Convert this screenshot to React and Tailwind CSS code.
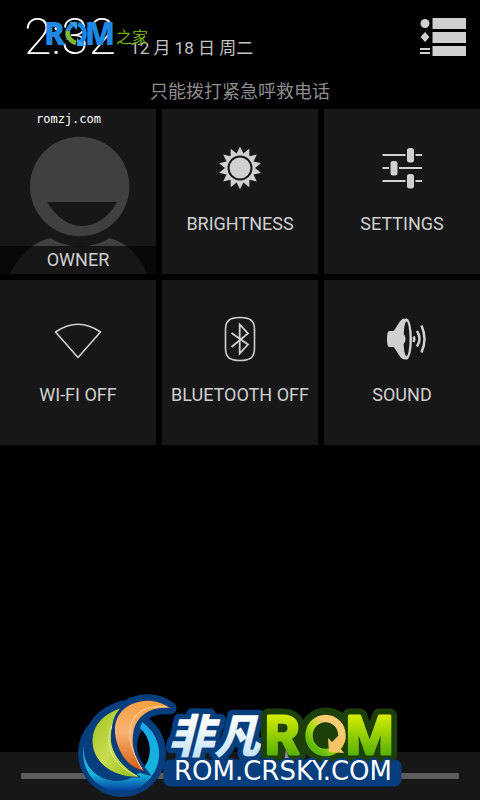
const sunPoints = Array.from({ length: 28 }, (_, i) => {
  const r = i % 2 === 0 ? 21.5 : 15;
  const a = (i * Math.PI) / 14;
  return `${(24 + r * Math.sin(a)).toFixed(2)},${(24 - r * Math.cos(a)).toFixed(2)}`;
}).join(" ");

function SunIcon() {
  return (
    <svg className="size-12" viewBox="0 0 48 48" aria-hidden="true">
      <polygon points={sunPoints} fill="#d0d0d0" />
      <circle cx="24" cy="24" r="11.5" fill="#d0d0d0" stroke="#171717" strokeWidth="2" />
    </svg>
  );
}

function SlidersIcon() {
  return (
    <svg className="size-12" viewBox="0 0 48 48" fill="#d0d0d0" aria-hidden="true">
      <path d="M4.5 10h23v2h-23zM37.5 10H44v2h-6.5zM4.5 23H11v2H4.5zM21 23h23v2H21zM4.5 36h23v2h-23zM37.5 36H44v2h-6.5z" />
      <rect x="29" y="4" width="7" height="14.5" rx="2.5" />
      <rect x="12.5" y="17" width="7" height="14.5" rx="2.5" />
      <rect x="29" y="30" width="7" height="14.5" rx="2.5" />
    </svg>
  );
}

function WifiIcon() {
  return (
    <svg className="size-12" viewBox="0 0 48 48" fill="none" stroke="#d0d0d0" strokeWidth="1.6" strokeLinejoin="round" aria-hidden="true">
      <path d="M1.5 17Q24 1.5 46.5 17L24 42.5Z" />
    </svg>
  );
}

function BluetoothIcon() {
  return (
    <svg className="size-12" viewBox="0 0 48 48" fill="none" stroke="#d0d0d0" strokeWidth="1.6" aria-hidden="true">
      <path d="M24 2.5C35 2.5 38.5 6 38.5 15V33C38.5 42 35 45.500 24 45.500S9.500 42 9.500 33V15C9.500 6 13 2.500 24 2.500Z" />
      <path d="M15.500 18L32 29.500L23.700 38.500V9.500L32 18.500L15.500 32" strokeWidth="1.800" />
    </svg>
  );
}

function SpeakerIcon() {
  return (
    <svg className="size-12" viewBox="0 0 48 48" aria-hidden="true">
      <path d="M11 16H15.500C19 12 21 6 25 3.700H29V44.300H25C21 42 19 35.500 15.500 32H11Q9 31.500 9 24T11 16Z" fill="#d0d0d0" />
      <ellipse cx="28.500" cy="24" rx="5.500" ry="20.500" fill="#d0d0d0" />
      <ellipse cx="28.500" cy="24" rx="3" ry="17.500" fill="#171717" />
      <path d="M24 18Q27.500 20 27.500 24T24 30Z" fill="#d0d0d0" />
      <path d="M35.500 21.500Q37 24 35.500 27" fill="none" stroke="#d0d0d0" strokeWidth="2.500" />
      <path d="M39 16Q44 24 39 31.500M43.500 10.500Q49.500 24 43.500 37.500" fill="none" stroke="#d0d0d0" strokeWidth="2.500" />
    </svg>
  );
}

function Tile({ label, children }) {
  return (
    <button className="flex flex-col items-center bg-[#171717] pt-[35px] pb-[38px]">
      {children}
      <span className="mt-5 text-lg leading-6 whitespace-nowrap">{label}</span>
    </button>
  );
}

function OwnerTile() {
  return (
    <button className="relative flex flex-col justify-end overflow-hidden bg-[#171717]">
      <svg className="absolute bottom-0 left-1/2 h-[165px] w-[156px] -translate-x-1/2" viewBox="0 0 156 165" aria-hidden="true">
        <path d="M10 165Q24 136 50 129Q80 146 110 129Q136 137 147 165Z" fill="#404040" />
        <circle cx="79.700" cy="77.500" r="49.700" fill="#404040" />
        <path d="M47 93H117C108 109 95 117 82 117S57 109 47 93Z" fill="#171717" />
      </svg>
      <span className="relative w-full bg-black/65 py-0.5 text-lg leading-6">OWNER</span>
    </button>
  );
}

function TopWatermark() {
  return (
    <div className="pointer-events-none absolute top-4 left-9">
      <svg className="h-8 w-28 overflow-visible" viewBox="36 16 112 32" role="img" aria-label="ROM之家">
        <g className="font-['Open_Sans',sans-serif] text-[31px] font-extrabold" fill="#1f88e4">
          <text x="44" y="45">R</text>
          <text x="85" y="45">M</text>
        </g>
        <path d="M72 25A10.500 10.500 0 0 0 69 39" fill="none" stroke="#2488df" strokeWidth="4.500" />
        <path d="M68 31A10.500 10.500 0 0 0 76 43" fill="none" stroke="#80b828" strokeWidth="4.500" />
        <path d="M78 24A10.500 10.500 0 0 1 79 43" fill="none" stroke="#1688e8" strokeWidth="4.500" />
        <path d="M69 22H77V30ZM86 46H77V38Z" fill="#2ca2f0" />
        <text x="116" y="43" className="font-['Noto_Sans_CJK_SC',sans-serif] text-base" fill="#74b000">之家</text>
      </svg>
      <div className="mt-[63px] font-['DejaVu_Sans_Mono',monospace] text-xs leading-4 text-white">romzj.com</div>
    </div>
  );
}

const greenMoon = "M123 707C104 713 92 724 92 742C93 764 115 779 140 777C122 767 108 751 112 730C114 719 117 713 123 707Z";
const orangeMoon = "M170 708C157 699 143 699 132 704C116 711 111 727 118 746C123 760 132 768 144 771C133 757 131 742 134 729C138 715 151 706 170 708Z";

function BottomWatermark() {
  return (
    <svg
      className="pointer-events-none absolute bottom-0 left-1/2 h-[108px] w-[328px] -translate-x-1/2"
      viewBox="76 692 328 108"
      role="img"
      aria-label="非凡ROM ROM.CRSKY.COM"
    >
      <defs>
        <linearGradient id="lime" x1="0" y1="0" x2="1" y2="1">
          <stop offset="0" stopColor="#9cc21c" />
          <stop offset="0.500" stopColor="#c8dc50" />
          <stop offset="1" stopColor="#8fbb14" />
        </linearGradient>
        <linearGradient id="amber" x1="0" y1="0" x2="0" y2="1">
          <stop offset="0" stopColor="#f8a040" />
          <stop offset="0.450" stopColor="#f9b272" />
          <stop offset="1" stopColor="#d95a10" />
        </linearGradient>
        <linearGradient id="sea" x1="0" y1="0" x2="0" y2="1">
          <stop offset="0" stopColor="#18a8e8" />
          <stop offset="0.750" stopColor="#14b4dc" />
          <stop offset="1" stopColor="#063898" />
        </linearGradient>
        <linearGradient id="ice" x1="0" y1="0" x2="0" y2="1">
          <stop offset="0.300" stopColor="#ffffff" />
          <stop offset="1" stopColor="#b4dcf8" />
        </linearGradient>
        <linearGradient id="leaf" gradientUnits="userSpaceOnUse" x1="0" y1="714" x2="0" y2="758">
          <stop offset="0" stopColor="#d8ee00" />
          <stop offset="1" stopColor="#4cac08" />
        </linearGradient>
        <linearGradient id="ring" gradientUnits="userSpaceOnUse" x1="336" y1="720" x2="312" y2="746">
          <stop offset="0.250" stopColor="#f8cc70" />
          <stop offset="0.550" stopColor="#b8dc18" />
          <stop offset="1" stopColor="#60b80c" />
        </linearGradient>
      </defs>

      <g fill="#063e7e" stroke="#063e7e" strokeLinejoin="round">
        <circle cx="122" cy="753" r="43.500" />
        <path d={greenMoon} strokeWidth="13" />
        <path d={orangeMoon} strokeWidth="13" />
        <rect x="164" y="760" width="237" height="26" rx="6" />
      </g>
      <path d="M143 729Q156 748 145 766Q130 748 143 729Z" fill="#050505" />
      <path d="M85 742A38 38 0 1 0 142 722L140 728A33 31 0 1 1 85 742Z" fill="url(#sea)" />
      <path d={greenMoon} fill="url(#lime)" stroke="#063e7e" strokeWidth="1" />
      <path d="M122 710C98 737 109 764 137 776" fill="none" stroke="#e4efa0" strokeWidth="1" />
      <path d={orangeMoon} fill="url(#amber)" stroke="#063e7e" strokeWidth="6" paintOrder="stroke" />
      <path d="M167 707C133 703 117 728 142 769" fill="none" stroke="#ffd9aa" strokeWidth="1" />

      <text
        x="168"
        y="753"
        className="font-['Noto_Sans_CJK_SC',sans-serif] text-[46px] font-black italic"
        fill="url(#ice)"
        stroke="#063e7e"
        strokeWidth="11"
        strokeLinejoin="round"
        paintOrder="stroke"
      >
        非凡
      </text>

      <g fill="#1d3f08" stroke="#1d3f08" strokeWidth="15" strokeLinejoin="round" className="font-[Roboto,sans-serif] text-[54px] font-bold">
        <text x="265" y="754">R</text>
        <text x="346" y="754">M</text>
        <ellipse cx="326" cy="735" rx="20" ry="20" />
      </g>
      <path d="M284 762L286 749L290 762Z" fill="#8c8c8c" />
      <g fill="url(#leaf)" stroke="url(#leaf)" strokeWidth="3" strokeLinejoin="round" className="font-[Roboto,sans-serif] text-[54px] font-bold">
        <text x="265" y="754">R</text>
        <text x="346" y="754">M</text>
      </g>
      <ellipse cx="325.500" cy="735.500" rx="16.500" ry="17" fill="none" stroke="url(#ring)" strokeWidth="7.500" />
      <path d="M328 738L332 742L338 736L346 738L340 748L344 753L329 752Z" fill="#f8c468" />

      <text
        x="283"
        y="780"
        textAnchor="middle"
        className="font-['DejaVu_Sans',sans-serif] text-[26px]"
        fill="#ffffff"
        stroke="#063e7e"
        strokeWidth="4"
        strokeLinejoin="round"
        paintOrder="stroke"
      >
        ROM.CRSKY.COM
      </text>
    </svg>
  );
}

export default function App() {
  return (
    <div className="relative flex min-h-screen flex-col bg-black font-[Roboto,'Noto_Sans_CJK_SC',sans-serif] text-[#d0d0d0]">
      <header className="flex items-start justify-between pt-[9px] pr-3.5 pl-6">
        <div className="flex items-baseline gap-3.5">
          <time className="text-[50px] leading-14 font-extralight text-white">2:32</time>
          <span className="text-[17px] leading-6 text-[#c4c4c4]">12 月 18 日 周二</span>
        </div>
        <button className="mt-[9px]" aria-label="Notifications">
          <svg className="h-[38px] w-[46px]" viewBox="0 0 46 38" fill="#d0d0d0" aria-hidden="true">
            <circle cx="5" cy="5.500" r="4.500" />
            <path d="M5 14L9.500 19L5 24L0.500 19ZM0 30H10V32H0ZM0 34H10V36H0ZM12.500 0H46V11H12.500ZM12.500 14H46V25H12.500ZM12.500 28H46V38H12.500Z" />
          </svg>
        </button>
      </header>
      <p className="pt-[15px] pb-[5px] text-center text-lg leading-6 text-[#8c8c8c]">只能拨打紧急呼救电话</p>

      <main className="grid grid-cols-3 gap-1.5">
        <OwnerTile />
        <Tile label="BRIGHTNESS"><SunIcon /></Tile>
        <Tile label="SETTINGS"><SlidersIcon /></Tile>
        <Tile label="WI-FI OFF"><WifiIcon /></Tile>
        <Tile label="BLUETOOTH OFF"><BluetoothIcon /></Tile>
        <Tile label="SOUND"><SpeakerIcon /></Tile>
      </main>

      <footer className="mt-auto bg-[#171717] px-[21px] py-[21px]">
        <div className="h-1.5 bg-[#5c5c5c]" />
      </footer>

      <TopWatermark />
      <BottomWatermark />
    </div>
  );
}
